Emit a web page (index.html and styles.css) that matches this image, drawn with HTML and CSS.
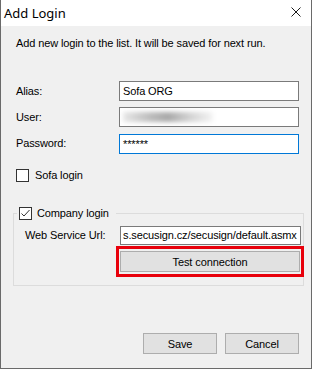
FILE: index.html
```html
<!DOCTYPE html>
<html>
<head>
<meta charset="utf-8">
<link rel="stylesheet" href="styles.css">
</head>
<body>
<div class="window">
  <div class="titlebar">
    <span class="title">Add Login</span>
    <svg class="close" width="10" height="10" viewBox="0 0 10 10"><path d="M0.5 0.5 L9.5 9.5 M9.5 0.5 L0.5 9.5" stroke="#1a1a1a" stroke-width="1" fill="none"/></svg>
  </div>
  <div class="content">
    <p class="desc">Add new login to the list. It will be saved for next run.</p>
    <div class="form">
      <label class="lbl">Alias:</label>
      <div class="input">Sofa ORG</div>
      <label class="lbl">User:</label>
      <div class="input"><span class="blur"></span></div>
      <label class="lbl pw">Password:</label>
      <div class="input focus pw">******</div>
    </div>
    <div class="check sofa"><span class="box"></span><span>Sofa login</span></div>
    <fieldset class="group">
      <legend class="check"><span class="box checked"><svg width="11" height="11" viewBox="0 0 11 11"><path d="M1.5 5.5 L4 8 L9.5 2" stroke="#333" stroke-width="1" fill="none"/></svg></span><span>Company login</span></legend>
      <div class="urlrow">
        <label class="lbl">Web Service Url:</label>
        <div class="input url"><span>s.secusign.cz/secusign/default.asmx</span></div>
      </div>
      <div class="highlight"><button class="btn wide">Test connection</button></div>
    </fieldset>
    <div class="actions">
      <button class="btn">Save</button>
      <button class="btn">Cancel</button>
    </div>
  </div>
</div>
</body>
</html>
```
FILE: styles.css
```css
* { box-sizing: border-box; }
html, body { margin: 0; padding: 0; }
body {
  width: 312px;
  height: 369px;
  font-family: "Liberation Sans", Arial, sans-serif;
  font-size: 11px;
  letter-spacing: -0.12px;
  color: #000;
  background: #f0f0f0;
}
.window {
  width: 312px;
  height: 369px;
  border: 1px solid #6a6a6a;
  border-top: none;
  background: #f0f0f0;
}
.titlebar {
  height: 26px;
  background: #fff;
  display: flex;
  align-items: center;
  justify-content: space-between;
  padding: 0 10px 0 3px;
}
.title {
  font-family: "Noto Sans", "Open Sans", sans-serif;
  font-size: 13px;
  letter-spacing: 0;
  color: #000;
  margin-top: -1px;
}
.close { margin-top: -2px; }
.content {
  padding: 11px 11px 0 15px;
}
.desc {
  margin: 0;
  line-height: 13px;
  color: #000;
}
.form {
  margin-top: 31px;
  display: grid;
  grid-template-columns: 103px 180px;
  grid-template-rows: 20px 20px 20px;
  row-gap: 6px;
  align-items: center;
}
.form .pw { margin-top: 1px; }
.lbl { line-height: 13px; }
.input {
  height: 20px;
  background: #fff;
  border: 1px solid #7a7a7a;
  padding: 0 3px;
  line-height: 18px;
  white-space: nowrap;
  overflow: hidden;
}
.input.focus { border-color: #0078d7; }
.blur {
  display: inline-block;
  width: 90px;
  height: 10px;
  margin-top: 4px;
  background: linear-gradient(90deg, #e8e8e8 0%, #bdbdbd 30%, #a9a9a9 50%, #d4d4d4 75%, #f4f4f4 100%);
  filter: blur(2px);
  vertical-align: top;
}
.check {
  display: flex;
  align-items: center;
  gap: 6px;
  line-height: 13px;
}
.box {
  width: 13px;
  height: 13px;
  border: 1px solid #333;
  background: #fff;
  flex: none;
  display: flex;
  align-items: center;
  justify-content: center;
}
.sofa { margin-top: 16px; }
.group {
  margin: 25px 0 0 -3px;
  width: 291px;
  border: 1px solid #dcdcdc;
  padding: 0 0 8px 11px;
  min-width: 0;
}
.group legend {
  padding: 0 7px 0 2px;
  margin-left: -8px;
  gap: 5px;
}
.urlrow {
  display: grid;
  grid-template-columns: 95px 181px;
  align-items: center;
  margin-top: 6px;
}
.input.url {
  height: 19px;
  line-height: 17px;
  padding: 0 2px;
  direction: rtl;
  text-align: left;
}
.input.url span { direction: ltr; unicode-bidi: embed; }
.highlight {
  margin: 1px 0 0 91px;
  width: 188px;
  height: 31px;
  border: 3px solid #e8000b;
  padding: 2px 1px;
}
.btn {
  font-family: "Liberation Sans", Arial, sans-serif;
  font-size: 11px;
  letter-spacing: -0.1px;
  color: #000;
  background: #e1e1e1;
  border: 1px solid #adadad;
  height: 21px;
  width: 74px;
  padding: 0;
  display: block;
}
.btn.wide { width: 180px; height: 21px; margin: 0 auto; }
.actions {
  margin-top: 47px;
  display: flex;
  justify-content: flex-end;
  gap: 8px;
  padding-right: 1px;
}
```
